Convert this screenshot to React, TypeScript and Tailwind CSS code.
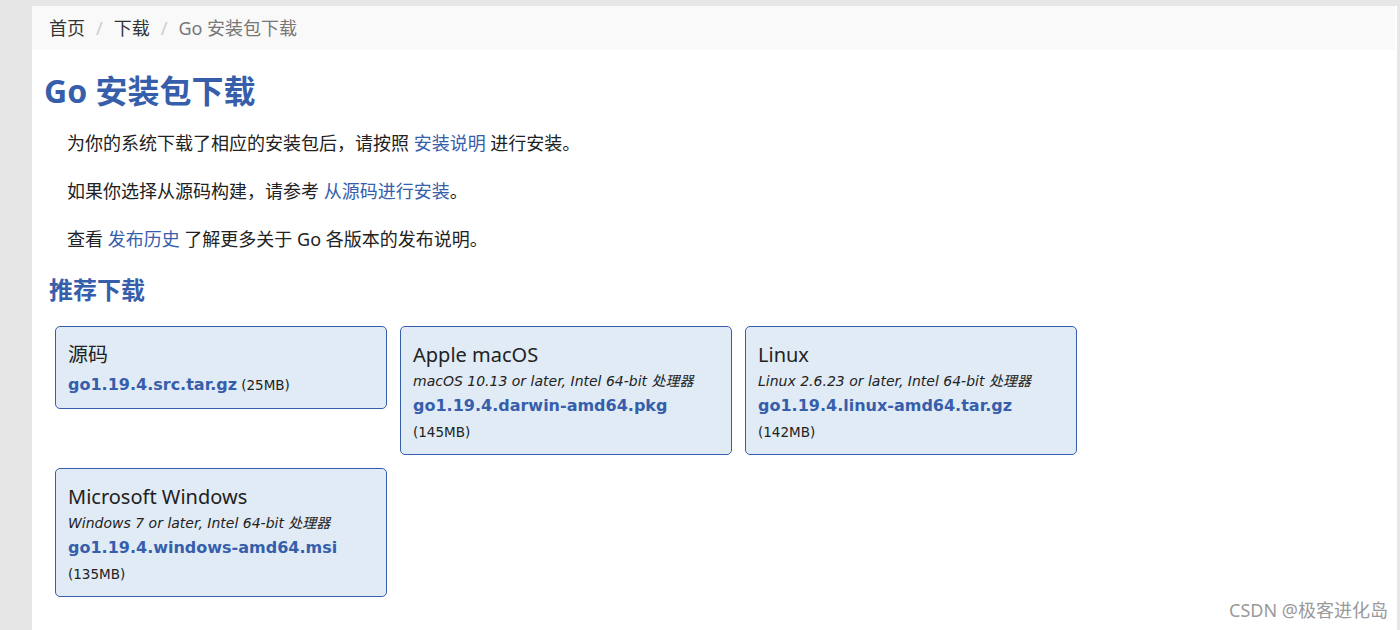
import React from "react";

const cjk = { fontFamily: '"Noto Sans", "Noto Sans CJK SC", sans-serif' };
const mono = { fontFamily: '"DejaVu Sans", "Noto Sans CJK SC", sans-serif' };

type Card = { title: string; sub?: string; file: string; size: string; inline?: boolean };

const cards: Card[] = [
  { title: "源码", file: "go1.19.4.src.tar.gz", size: "(25MB)", inline: true },
  { title: "Apple macOS", sub: "macOS 10.13 or later, Intel 64-bit 处理器", file: "go1.19.4.darwin-amd64.pkg", size: "(145MB)" },
  { title: "Linux", sub: "Linux 2.6.23 or later, Intel 64-bit 处理器", file: "go1.19.4.linux-amd64.tar.gz", size: "(142MB)" },
  { title: "Microsoft Windows", sub: "Windows 7 or later, Intel 64-bit 处理器", file: "go1.19.4.windows-amd64.msi", size: "(135MB)" },
];

function DownloadCard({ c }: { c: Card }) {
  return (
    <div className="rounded-[5px] border border-[#375eab] bg-[#e0ebf5] pl-[12px] pr-[10px] pt-[14px] pb-[9px]">
      <div className="text-[20px] leading-[28px] text-[#222]" style={cjk}>
        {c.title}
      </div>
      {c.sub && (
        <div className="text-[14px] leading-[24px] italic text-[#222]" style={mono}>
          {c.sub}
        </div>
      )}
      {c.inline ? (
        <div className="leading-[26px] mt-[2px] mb-[1px]">
          <a className="text-[16px] font-bold text-[#375eab]" style={mono}>
            {c.file}
          </a>{" "}
          <span className="text-[13.5px] text-[#222]" style={mono}>
            {c.size}
          </span>
        </div>
      ) : (
        <>
          <div className="text-[16px] leading-[26px] font-bold text-[#375eab]" style={mono}>
            {c.file}
          </div>
          <div className="text-[13.5px] leading-[26px] text-[#222]" style={mono}>
            {c.size}
          </div>
        </>
      )}
    </div>
  );
}

export default function App() {
  return (
    <div className="relative flex h-[630px] w-[1400px] overflow-hidden bg-[#e6e6e6] pl-[32px] pr-[3px] pt-[6px]">
      <div className="flex-1 bg-white" style={cjk}>
        <div className="flex h-[44px] items-center bg-[#f9f9f9] pl-[17px] text-[18px] mr-[2px]">
          <span className="text-[#333]">首页</span>
          <span className="px-[11px] text-[#ccc]">/</span>
          <span className="text-[#333]">下载</span>
          <span className="px-[11px] text-[#ccc]">/</span>
          <span className="text-[#777]">Go 安装包下载</span>
        </div>

        <h1 className="mt-[21px] pl-[12px] text-[32px] leading-[40px] font-bold text-[#375eab]">
          Go 安装包下载
        </h1>

        <div className="mt-[20px] flex flex-col gap-[24px] pl-[35px] text-[18px] leading-[24px] text-[#222]">
          <p>
            为你的系统下载了相应的安装包后，请按照 <a className="text-[#375eab]">安装说明</a> 进行安装。
          </p>
          <p>
            如果你选择从源码构建，请参考 <a className="text-[#375eab]">从源码进行安装</a>。
          </p>
          <p>
            查看 <a className="text-[#375eab]">发布历史</a> 了解更多关于 Go 各版本的发布说明。
          </p>
        </div>

        <h2 className="mt-[24px] pl-[17px] text-[24px] leading-[30px] font-bold text-[#375eab]">
          推荐下载
        </h2>

        <div className="mt-[21px] grid w-[1045px] grid-cols-3 items-start gap-[13px] pl-[23px]">
          {cards.map((c) => (
            <DownloadCard key={c.file} c={c} />
          ))}
        </div>
      </div>

      <div
        className="absolute right-[12px] bottom-[6px] text-[18px] text-[#9a9a9a]"
        style={{ ...cjk, textShadow: "0 0 2px #fff" }}
      >
        CSDN @极客进化岛
      </div>
    </div>
  );
}
